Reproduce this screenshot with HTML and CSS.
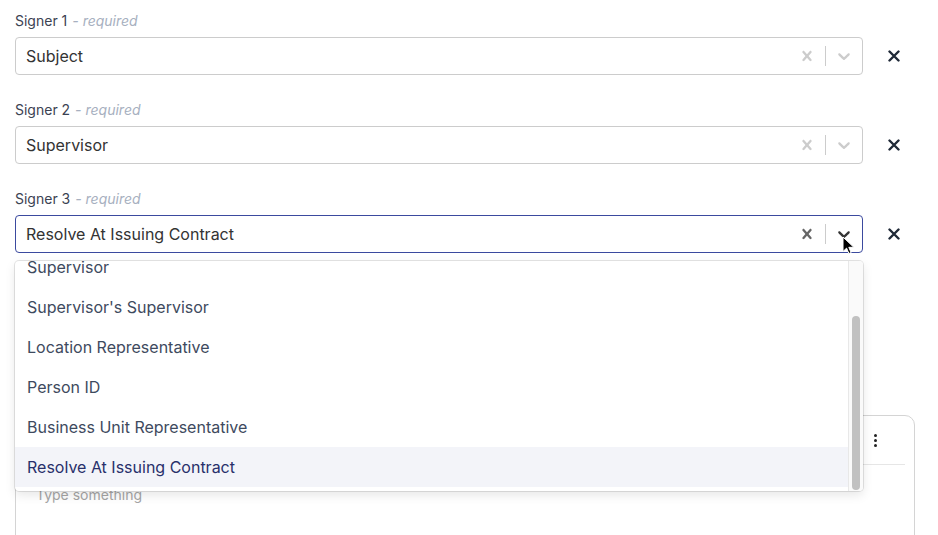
FILE: index.html
```html
<!DOCTYPE html>
<html lang="en">
<head>
<meta charset="UTF-8">
<meta name="viewport" content="width=device-width, initial-scale=1.0">
<title>Signers</title>
<link rel="stylesheet" href="styles.css">
</head>
<body>

<div class="page">

  <div class="field">
    <div class="field-label">Signer 1 <span class="hint">- required</span></div>
    <div class="field-row">
      <div class="select">
        <div class="select-value">Subject</div>
        <div class="indicator"><svg viewBox="0 0 20 20" width="20" height="20"><path d="M14.348 14.849c-0.469 0.469-1.229 0.469-1.697 0l-2.651-3.030-2.651 3.029c-0.469 0.469-1.229 0.469-1.697 0-0.469-0.469-0.469-1.229 0-1.697l2.758-3.15-2.759-3.152c-0.469-0.469-0.469-1.228 0-1.697s1.228-0.469 1.697 0l2.652 3.031 2.651-3.031c0.469-0.469 1.228-0.469 1.697 0s0.469 1.229 0 1.697l-2.758 3.152 2.758 3.15c0.469 0.469 0.469 1.229 0 1.698z"/></svg></div>
        <span class="separator"></span>
        <div class="indicator"><svg viewBox="0 0 20 20" width="20" height="20"><path d="M4.516 7.548c0.436-0.446 1.043-0.481 1.576 0l3.908 3.747 3.908-3.747c0.533-0.481 1.141-0.446 1.574 0 0.436 0.445 0.408 1.197 0 1.615-0.406 0.418-4.695 4.502-4.695 4.502-0.217 0.223-0.502 0.335-0.787 0.335s-0.57-0.112-0.789-0.335c0 0-4.287-4.084-4.695-4.502s-0.436-1.170 0-1.615z"/></svg></div>
      </div>
      <button class="remove-btn"><svg viewBox="0 0 12 12" width="12" height="12"><path d="M1.5 1.5l9 9M10.5 1.5l-9 9"/></svg></button>
    </div>
  </div>

  <div class="field">
    <div class="field-label">Signer 2 <span class="hint">- required</span></div>
    <div class="field-row">
      <div class="select">
        <div class="select-value">Supervisor</div>
        <div class="indicator"><svg viewBox="0 0 20 20" width="20" height="20"><path d="M14.348 14.849c-0.469 0.469-1.229 0.469-1.697 0l-2.651-3.030-2.651 3.029c-0.469 0.469-1.229 0.469-1.697 0-0.469-0.469-0.469-1.229 0-1.697l2.758-3.15-2.759-3.152c-0.469-0.469-0.469-1.228 0-1.697s1.228-0.469 1.697 0l2.652 3.031 2.651-3.031c0.469-0.469 1.228-0.469 1.697 0s0.469 1.229 0 1.697l-2.758 3.152 2.758 3.15c0.469 0.469 0.469 1.229 0 1.698z"/></svg></div>
        <span class="separator"></span>
        <div class="indicator"><svg viewBox="0 0 20 20" width="20" height="20"><path d="M4.516 7.548c0.436-0.446 1.043-0.481 1.576 0l3.908 3.747 3.908-3.747c0.533-0.481 1.141-0.446 1.574 0 0.436 0.445 0.408 1.197 0 1.615-0.406 0.418-4.695 4.502-4.695 4.502-0.217 0.223-0.502 0.335-0.787 0.335s-0.57-0.112-0.789-0.335c0 0-4.287-4.084-4.695-4.502s-0.436-1.170 0-1.615z"/></svg></div>
      </div>
      <button class="remove-btn"><svg viewBox="0 0 12 12" width="12" height="12"><path d="M1.5 1.5l9 9M10.5 1.5l-9 9"/></svg></button>
    </div>
  </div>

  <div class="field">
    <div class="field-label">Signer 3 <span class="hint">- required</span></div>
    <div class="field-row">
      <div class="select is-open">
        <div class="select-value">Resolve At Issuing Contract</div>
        <div class="indicator"><svg viewBox="0 0 20 20" width="20" height="20"><path d="M14.348 14.849c-0.469 0.469-1.229 0.469-1.697 0l-2.651-3.030-2.651 3.029c-0.469 0.469-1.229 0.469-1.697 0-0.469-0.469-0.469-1.229 0-1.697l2.758-3.15-2.759-3.152c-0.469-0.469-0.469-1.228 0-1.697s1.228-0.469 1.697 0l2.652 3.031 2.651-3.031c0.469-0.469 1.228-0.469 1.697 0s0.469 1.229 0 1.697l-2.758 3.152 2.758 3.15c0.469 0.469 0.469 1.229 0 1.698z"/></svg></div>
        <span class="separator"></span>
        <div class="indicator chevron-hover"><svg viewBox="0 0 20 20" width="20" height="20"><path d="M4.516 7.548c0.436-0.446 1.043-0.481 1.576 0l3.908 3.747 3.908-3.747c0.533-0.481 1.141-0.446 1.574 0 0.436 0.445 0.408 1.197 0 1.615-0.406 0.418-4.695 4.502-4.695 4.502-0.217 0.223-0.502 0.335-0.787 0.335s-0.57-0.112-0.789-0.335c0 0-4.287-4.084-4.695-4.502s-0.436-1.170 0-1.615z"/></svg></div>

        <svg class="cursor" viewBox="0 0 12 19" width="12" height="19"><path d="M1 1v14.5l3.6-3.4 2.3 5.4 2.2-.9-2.3-5.3h5z" fill="#000" stroke="#fff" stroke-width="1"/></svg>

        <div class="menu">
          <div class="menu-list" id="menu-list">
            <div class="option">Subject</div>
            <div class="option">Supervisor</div>
            <div class="option">Supervisor's Supervisor</div>
            <div class="option">Location Representative</div>
            <div class="option">Person ID</div>
            <div class="option">Business Unit Representative</div>
            <div class="option selected">Resolve At Issuing Contract</div>
          </div>
          <div class="scrollbar"><div class="scroll-thumb"></div></div>
        </div>
      </div>
      <button class="remove-btn"><svg viewBox="0 0 12 12" width="12" height="12"><path d="M1.5 1.5l9 9M10.5 1.5l-9 9"/></svg></button>
    </div>
  </div>

  <div class="editor">
    <div class="editor-toolbar">
      <span class="kebab"><i></i><i></i><i></i></span>
    </div>
    <div class="editor-body">Type something</div>
  </div>

</div>

<script>
const menuList = document.getElementById('menu-list');
menuList.scrollTop = menuList.scrollHeight;
</script>

</body>
</html>
```

FILE: styles.css
```css
body {
  margin: 0;
  font-family: Inter, "Noto Sans", Arial, sans-serif;
  background: #fff;
  color: #333;
  overflow: hidden;
}
.page {
  width: 900px;
  padding: 12px 0 0 15px;
}
.field {
  margin-bottom: 26px;
}
.field-label {
  font-size: 14px;
  line-height: 18px;
  color: #3b4252;
  margin-bottom: 7px;
}
.hint {
  font-style: italic;
  color: #a7b0c0;
  margin-left: 1px;
}
.field-row {
  display: flex;
  align-items: center;
}
.select {
  position: relative;
  flex: 0 0 848px;
  box-sizing: border-box;
  height: 38px;
  display: flex;
  align-items: center;
  border: 1px solid #cccccc;
  border-radius: 4px;
  background: #fff;
}
.select.is-open {
  border-color: #3b4a9f;
}
.select-value {
  flex: 1;
  padding-left: 10px;
  font-size: 16px;
  color: #333;
}
.indicator {
  display: flex;
  padding: 8px;
  fill: #cccccc;
}
.is-open .indicator {
  fill: #666666;
}
.is-open .chevron-hover {
  fill: #333333;
}
.separator {
  align-self: stretch;
  width: 1px;
  margin: 8px 0;
  background: #cccccc;
}
.remove-btn {
  width: 24px;
  height: 24px;
  margin-left: 19px;
  padding: 0;
  border: none;
  background: none;
  display: flex;
  align-items: center;
  justify-content: center;
  cursor: pointer;
}
.remove-btn svg {
  stroke: #1f2937;
  stroke-width: 2.4;
  stroke-linecap: round;
  fill: none;
}
.cursor {
  position: absolute;
  left: 826px;
  top: 20px;
  z-index: 3;
}
.menu {
  position: absolute;
  top: 45px;
  left: -1px;
  right: -1px;
  z-index: 2;
  display: flex;
  background: #fff;
  border-radius: 4px;
  box-shadow: 0 0 0 1px rgba(0, 0, 0, 0.1), 0 4px 11px rgba(0, 0, 0, 0.1);
  overflow: hidden;
}
.menu-list {
  flex: 1;
  height: 230px;
  box-sizing: border-box;
  padding: 4px 0;
  overflow: hidden;
}
.scrollbar {
  width: 14px;
  display: flex;
  flex-direction: column;
  justify-content: flex-end;
  align-items: center;
  padding-bottom: 1px;
  background: #fafafa;
  border-left: 1px solid #e8e8e8;
}
.scroll-thumb {
  width: 8px;
  height: 174px;
  border-radius: 4px;
  background: #c1c1c1;
}
.option {
  height: 40px;
  line-height: 40px;
  padding: 0 12px;
  font-size: 16px;
  color: #3e4a5e;
}
.option.selected {
  background: #f3f4f9;
  color: #28306b;
}
.editor {
  margin-top: 162px;
  height: 140px;
  border: 1px solid #d4d4d4;
  border-radius: 10px 10px 0 0;
}
.editor-toolbar {
  height: 48px;
  margin: 0 9px 0 0;
  border-bottom: 1px solid #e6e6e6;
  display: flex;
  justify-content: flex-end;
  align-items: center;
}
.kebab {
  display: flex;
  flex-direction: column;
  gap: 2px;
  margin-right: 28px;
}
.kebab i {
  width: 3px;
  height: 3px;
  border-radius: 50%;
  background: #222;
}
.editor-body {
  padding: 21px 20px;
  font-size: 14px;
  color: #a5a5a5;
}
```
